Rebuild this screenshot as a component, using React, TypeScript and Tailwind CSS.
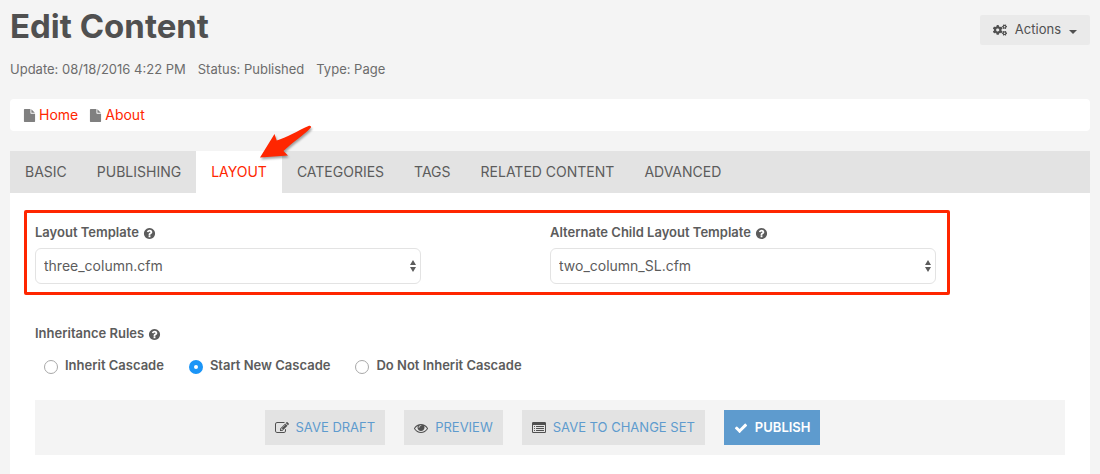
import type { ReactNode } from "react";
import { FaCogs } from "react-icons/fa";

const tabs = [
	{ label: "BASIC", active: false },
	{ label: "PUBLISHING", active: false },
	{ label: "LAYOUT", active: true },
	{ label: "CATEGORIES", active: false },
	{ label: "TAGS", active: false },
	{ label: "RELATED CONTENT", active: false },
	{ label: "ADVANCED", active: false },
];

const rules = ["Inherit Cascade", "Start New Cascade", "Do Not Inherit Cascade"];

const paths = {
	edit: "M888 1184l116-116-152-152-116 116v56h96v96h56zm440-720q-16-16-33 1l-350 350q-17 17-1 33t33-1l350-350q17-17 1-33zm80 594v190q0 119-84.5 203.5t-203.5 84.5h-832q-119 0-203.5-84.5t-84.5-203.5v-832q0-119 84.5-203.5t203.5-84.5h832q63 0 117 25 15 7 18 23 3 17-9 29l-49 49q-14 14-32 8-23-6-45-6h-832q-66 0-113 47t-47 113v832q0 66 47 113t113 47h832q66 0 113-47t47-113v-126q0-13 9-22l64-64q15-15 35-7t20 29zm-96-738l288 288-672 672h-288v-288zm444 132l-92 92-288-288 92-92q28-28 68-28t68 28l152 152q28 28 28 68t-28 68z",
	eye: "M1664 960q-152-236-381-353 61 104 61 225 0 185-131.5 316.5t-316.5 131.5-316.5-131.5-131.5-316.5q0-121 61-225-229 117-381 353 133 205 333.5 326.5t434.5 121.5 434.5-121.5 333.5-326.5zm-720-384q0-20-14-34t-34-14q-125 0-214.5 89.5t-89.5 214.5q0 20 14 34t34 14 34-14 14-34q0-86 61-147t147-61q20 0 34-14t14-34zm848 384q0 34-20 69-140 230-376.5 368.5t-499.5 138.5-499.5-139-376.5-368q-20-35-20-69t20-69q140-229 376.5-368t499.5-139 499.5 139 376.5 368q20 35 20 69z",
	list: "M384 1184v64q0 32-32 32h-64q-32 0-32-32v-64q0-32 32-32h64q32 0 32 32zm0-256v64q0 32-32 32h-64q-32 0-32-32v-64q0-32 32-32h64q32 0 32 32zm0-256v64q0 32-32 32h-64q-32 0-32-32v-64q0-32 32-32h64q32 0 32 32zm1152 512v64q0 32-32 32h-960q-32 0-32-32v-64q0-32 32-32h960q32 0 32 32zm0-256v64q0 32-32 32h-960q-32 0-32-32v-64q0-32 32-32h960q32 0 32 32zm0-256v64q0 32-32 32h-960q-32 0-32-32v-64q0-32 32-32h960q32 0 32 32zm128 704v-832q0-32-32-32h-1472q-32 0-32 32v832q0 32 32 32h1472q32 0 32-32zm128-1088v1088q0 160-160 160h-1472q-160 0-160-160v-1088q0-160 160-160h1472q160 0 160 160z",
	check: "M1671 566q0 40-28 68l-724 724-136 136q-28 28-68 28t-68-28l-136-136-362-362q-28-28-28-68t28-68l136-136q28-28 68-28t68 28l294 295 656-657q28-28 68-28t68 28l136 136q28 28 28 68z",
	help: "M1024 1376v-192q0-14-9-23t-23-9h-192q-14 0-23 9t-9 23v192q0 14 9 23t23 9h192q14 0 23-9t9-23zm256-672q0-88-55.5-163t-138.5-116-170-41q-243 0-371 213-15 24 8 42l132 100q7 6 19 6 16 0 25-12 53-68 86-92 34-24 86-24 48 0 85.5 26t37.5 59q0 38-20 61t-68 45q-63 28-115.5 86.5t-52.5 125.5v36q0 14 9 23t23 9h192q14 0 23-9t9-23q0-19 21.5-49.5t54.5-49.5q32-18 49-28.5t46-35 44.5-48 28-60.5 12.5-81zm384 192q0 209-103 385.5t-279.5 279.5-385.5 103-385.5-103-279.5-279.5-103-385.5 103-385.5 279.5-279.5 385.5-103 385.5 103 279.5 279.5 103 385.5z",
	file: "M1152 512v-472q22 14 36 28l408 408q14 14 28 36h-472zm-128 32q0 40 28 68t68 28h544v1056q0 40-28 68t-68 28h-1344q-40 0-68-28t-28-68v-1600q0-40 28-68t68-28h800v544z",
};

function Icon({ name, className }: { name: keyof typeof paths; className: string }) {
	return (
		<svg viewBox="0 0 1792 1792" fill="currentColor" aria-hidden="true" className={className}>
			<path d={paths[name]} />
		</svg>
	);
}

function Crumb({ children }: { children: ReactNode }) {
	return (
		<li className="flex items-center gap-[3px]">
			<Icon name="file" className="size-[13px] text-[#808080]" />
			<a href="#" className="text-sm text-[#ff2600]">
				{children}
			</a>
		</li>
	);
}

function TemplateSelect({ id, label, value }: { id: string; label: string; value: string }) {
	return (
		<div>
			<div className="flex h-5 items-center gap-1 font-semibold">
				<label htmlFor={id}>{label}</label>
				<Icon name="help" className="size-[13px]" />
			</div>
			<div className="mt-[5px] grid w-3/4 items-center">
				<select
					id={id}
					className="col-start-1 row-start-1 h-9 w-full appearance-none rounded-md border border-[#e3e3e3] bg-white px-2 text-sm"
				>
					<option>{value}</option>
				</select>
				<svg
					viewBox="0 0 6 12"
					fill="currentColor"
					aria-hidden="true"
					className="pointer-events-none col-start-1 row-start-1 mr-[5px] h-3 w-1.5 justify-self-end"
				>
					<path d="M3 0 6 5H0zM3 12 0 7h6z" />
				</svg>
			</div>
		</div>
	);
}

function ActionButton({ icon, children }: { icon: keyof typeof paths; children: ReactNode }) {
	return (
		<button
			type="button"
			className="flex h-[35px] items-center gap-[7px] bg-[#e3e3e3] px-2.5 text-[13px] text-[#5e9bce]"
		>
			<Icon name={icon} className="size-3.5 text-[#505050]" />
			{children}
		</button>
	);
}

function Arrow() {
	return (
		<svg
			viewBox="0 0 56 38"
			aria-hidden="true"
			className="pointer-events-none absolute -top-7 left-[62px] z-10 h-[38px] w-14 drop-shadow-[1px_2px_1px_rgba(0,0,0,0.35)]"
		>
			<path
				d="M2 34.5 16.5 11l2.200 6.500C28 15 40 7.500 50.500 3c1.800-.8 3.500.5 2 2C46 12 35 19 25.500 28l4.500 4.500z"
				fill="#ff2600"
			/>
		</svg>
	);
}

export default function App() {
	return (
		<div className="min-h-screen bg-[#f4f4f4] px-2.5 font-['Inter',sans-serif] text-[13px] text-[#5c5c5c]">
			<header className="flex items-start justify-between">
				<div>
					<h1 className="pt-1.5 text-[33px] leading-10 font-bold text-[#505050]">Edit Content</h1>
					<ul className="mt-3.5 flex h-5 items-center gap-3 text-[#6c6c6c]">
						<li>Update: 08/18/2016 4:22 PM</li>
						<li>Status: Published</li>
						<li>Type: Page</li>
					</ul>
				</div>
				<button
					type="button"
					className="mt-[15px] flex h-[30px] items-center gap-2 rounded-xs bg-[#eaeaea] px-[13px] text-[#505050]"
				>
					<FaCogs className="size-3.5" />
					Actions
					<svg viewBox="0 0 8 4" fill="currentColor" aria-hidden="true" className="mt-1 h-1 w-2">
						<path d="M0 0h8L4 4z" />
					</svg>
				</button>
			</header>

			<nav aria-label="Breadcrumb" className="mt-[19px] rounded-sm bg-white px-[13px]">
				<ol className="flex h-8 items-center gap-[11px]">
					<Crumb>Home</Crumb>
					<Crumb>About</Crumb>
				</ol>
			</nav>

			<div role="tablist" className="mt-5 flex bg-[#e3e3e3] text-sm">
				{tabs.map(({ label, active }) => (
					<button
						key={label}
						type="button"
						role="tab"
						aria-selected={active}
						className={`relative h-[42px] px-[15px] ${active ? "bg-white text-[#ff2600]" : ""}`}
					>
						{label}
						{active && <Arrow />}
					</button>
				))}
			</div>

			<main className="min-h-[281px] bg-white px-[25px] pt-[30px]">
				<section className="relative grid grid-cols-2">
					<TemplateSelect id="layout" label="Layout Template" value="three_column.cfm" />
					<TemplateSelect
						id="child-layout"
						label="Alternate Child Layout Template"
						value="two_column_SL.cfm"
					/>
					<div className="pointer-events-none absolute -top-[13px] right-[115px] -bottom-[11px] -left-[11px] rounded-xs border-3 border-[#ff2600]" />
				</section>

				<fieldset className="mt-10 font-semibold">
					<legend className="flex h-5 items-center gap-1">
						Inheritance Rules
						<Icon name="help" className="size-[13px]" />
					</legend>
					<div className="mt-3 flex h-5 items-center gap-[25px] pl-[9px]">
						{rules.map((rule, i) => (
							<label key={rule} className="flex items-center gap-[7px]">
								<input
									type="radio"
									name="inherit"
									defaultChecked={i === 1}
									className="mt-0.5 size-3.5 appearance-none rounded-full border border-[#a8a8a8] bg-white checked:border-5 checked:border-[#1b95f7]"
								/>
								{rule}
							</label>
						))}
					</div>
				</fieldset>

				<div className="mt-6 flex justify-center gap-[19px] bg-[#f4f4f4] py-2.5 pr-[15px]">
					<ActionButton icon="edit">SAVE DRAFT</ActionButton>
					<ActionButton icon="eye">PREVIEW</ActionButton>
					<ActionButton icon="list">SAVE TO CHANGE SET</ActionButton>
					<button
						type="button"
						className="flex h-[35px] items-center gap-[7px] bg-[#5e9bce] px-2.5 text-[13px] font-semibold text-white"
					>
						<Icon name="check" className="size-3.5" />
						PUBLISH
					</button>
				</div>
			</main>
		</div>
	);
}
